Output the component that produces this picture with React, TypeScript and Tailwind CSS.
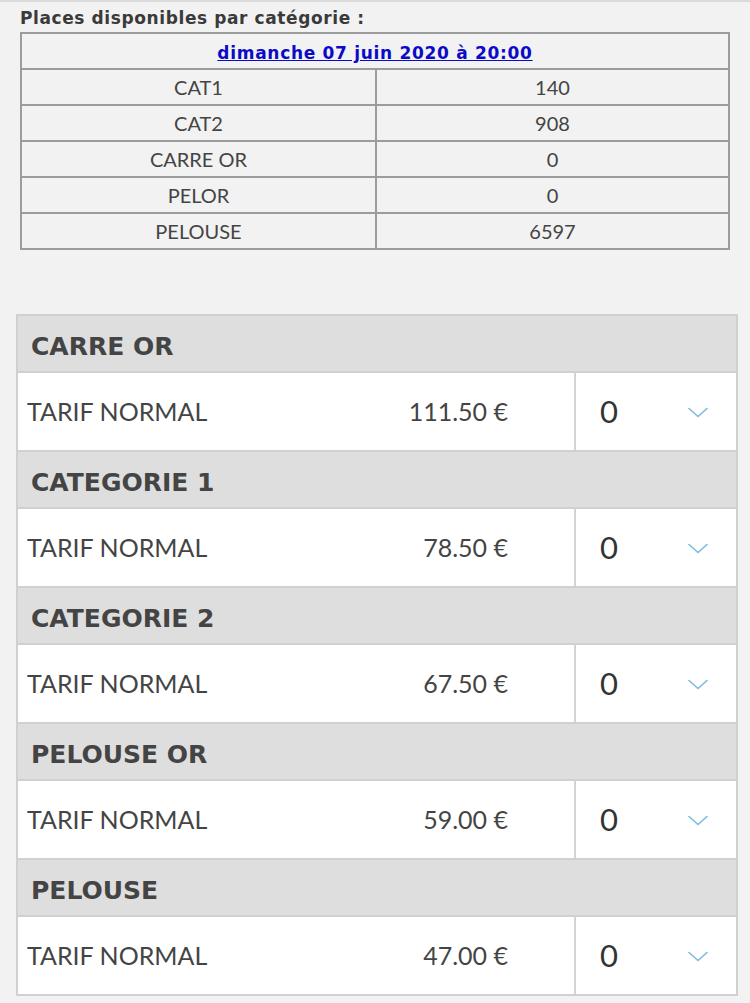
import React from "react";

const rows = [
  ["CAT1", "140"],
  ["CAT2", "908"],
  ["CARRE OR", "0"],
  ["PELOR", "0"],
  ["PELOUSE", "6597"],
];

const cats = [
  ["CARRE OR", "111.50 €"],
  ["CATEGORIE 1", "78.50 €"],
  ["CATEGORIE 2", "67.50 €"],
  ["PELOUSE OR", "59.00 €"],
  ["PELOUSE", "47.00 €"],
];

function Chevron() {
  return (
    <svg width="20" height="11" viewBox="0 0 20 11" fill="none">
      <path d="M1 1.5 L10 9.5 L19 1.5" stroke="#7cbadb" strokeWidth="1.6" strokeLinecap="round" strokeLinejoin="round" />
    </svg>
  );
}

const bold = { fontFamily: "'DejaVu Sans', Verdana, sans-serif" };

export default function App() {
  return (
    <div
      className="min-h-[1003px] w-[750px] bg-[#f2f2f2] border-t-2 border-[#dadada] text-[#444]"
      style={{ fontFamily: "Lato, 'Open Sans', sans-serif" }}
    >
      <div
        className="px-[20px] pt-[3px] text-[17px] font-bold leading-[27px] tracking-[0.6px] text-[#3a3a3a]"
        style={bold}
      >
        Places disponibles par catégorie :
      </div>
      <table className="ml-[20px] w-[710px] border-collapse border-2 border-[#9c9c9c] text-[20px] text-[#444]">
        <tbody>
          <tr className="h-[36px]">
            <td colSpan={2} className="border-2 border-[#9c9c9c] text-center">
              <a href="#" className="text-[17px] font-bold tracking-[0.7px] text-[#0a0ac8] underline" style={bold}>
                dimanche 07 juin 2020 à 20:00
              </a>
            </td>
          </tr>
          {rows.map(([a, b]) => (
            <tr key={a} className="h-[36px]">
              <td className="w-[355px] border-2 border-[#9c9c9c] text-center">{a}</td>
              <td className="border-2 border-[#9c9c9c] text-center">{b}</td>
            </tr>
          ))}
        </tbody>
      </table>
      <div className="ml-[16px] mt-[64px] w-[722px] border-x-2 border-t-2 border-[#d0d0d0]">
        {cats.map(([name, price]) => (
          <div key={name}>
            <div
              className="flex h-[57px] items-center border-b-2 border-[#d0d0d0] bg-[#dedede] pl-[13px] pt-[6px] text-[25px] font-bold text-[#444]"
              style={bold}
            >
              {name}
            </div>
            <div className="flex h-[79px] border-b-2 border-[#d0d0d0] bg-white">
              <div className="flex w-[558px] items-center justify-between border-r-2 border-[#d4d4d4] pl-[9px] pr-[66px] text-[25px] text-[#444]">
                <span>TARIF NORMAL</span>
                <span>{price}</span>
              </div>
              <div className="flex flex-1 items-center pl-[24px] pr-[28px]">
                <span className="text-[31px] text-[#333]">0</span>
                <span className="ml-auto mt-[2px]">
                  <Chevron />
                </span>
              </div>
            </div>
          </div>
        ))}
      </div>
    </div>
  );
}
